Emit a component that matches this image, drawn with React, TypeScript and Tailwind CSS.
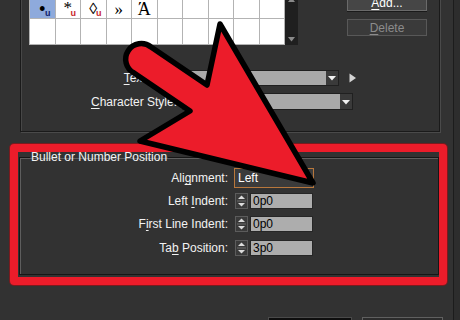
import React from "react";

const font = { fontFamily: '"Liberation Sans", Arial, sans-serif' };
const serif = { fontFamily: '"Liberation Serif", "Times New Roman", serif' };

function U({ children }: { children: React.ReactNode }) {
  return <span className="underline decoration-1 underline-offset-[2px]">{children}</span>;
}

type CellProps = { glyph?: string; mark?: "blue" | "red"; selected?: boolean; glyphClass?: string };

function Cell({ glyph, mark, selected, glyphClass }: CellProps) {
  return (
    <div
      className={`relative flex items-center justify-center pt-[6px] border-r border-b border-[#b3b3b3] ${
        selected ? "bg-[#8eaadc]" : "bg-white"
      }`}
    >
      {glyph && (
        <span className={`text-black leading-none ${glyphClass ?? "text-[17px]"}`} style={serif}>
          {glyph}
        </span>
      )}
      {mark && (
        <span
          className={`absolute left-[15px] bottom-[0px] text-[9px] leading-[9px] font-bold ${
            mark === "blue" ? "text-[#10206a]" : "text-[#c8262d]"
          }`}
          style={font}
        >
          u
        </span>
      )}
    </div>
  );
}

function Dropdown({ width, height }: { width: number; height: number }) {
  return (
    <div className="flex border border-[#202020]" style={{ width, height }}>
      <div className="flex-1 bg-[#a9a9a9]" />
      <div className="w-[12px] bg-[#3a3a3a] flex items-center justify-center">
        <svg width="8" height="6" viewBox="0 0 8 6">
          <path d="M0 1 H8 L4 5.5 Z" fill="#f2f2f2" />
        </svg>
      </div>
    </div>
  );
}

function Spinner() {
  return (
    <svg width="13" height="16" viewBox="0 0 13 16" className="shrink-0">
      <rect x="0" y="0" width="13" height="16" fill="#3a3a3a" />
      <rect x="0.5" y="0.5" width="12" height="15" fill="none" stroke="#5c5c5c" />
      <path d="M3 6 L6.5 2.5 L10 6 Z" fill="#dcdcdc" />
      <line x1="2" y1="8" x2="11" y2="8" stroke="#6a6a6a" />
      <path d="M3 10 L6.5 13.5 L10 10 Z" fill="#dcdcdc" />
    </svg>
  );
}

function SpinRow({ label, value }: { label: React.ReactNode; value: string }) {
  return (
    <div className="flex items-center h-[16px]">
      <div className="w-[198px] text-right whitespace-nowrap">{label}</div>
      <div className="ml-[7px] flex items-center">
        <Spinner />
        <div className="ml-[2px] w-[63px] h-[16px] bg-[#adadad] border border-[#262626] text-black text-[12px] leading-[14px] pl-[2px]">
          {value}
        </div>
      </div>
    </div>
  );
}

export default function App() {
  return (
    <div
      className="relative w-[460px] h-[320px] overflow-hidden bg-[#323232] text-[#f2f2f2] text-[12px] leading-[14px]"
      style={font}
    >
      <div className="flex h-full">
        <div className="w-[453px] shrink-0 flex flex-col">
          {/* upper frame */}
          <div className="ml-[20px] mt-[-12px] w-[420px] h-[144px] shrink-0 border border-[#1a1a1a] shadow-[1px_1px_0_#4a4a4a,inset_1px_1px_0_#474747] pl-[8px] pt-[5px]">
            <div className="flex">
              {/* glyph table */}
              <div className="flex h-[51px]">
                <div className="grid grid-cols-[repeat(10,25.5px)] grid-rows-[25px_26px] border-l border-[#b3b3b3]">
                  <Cell glyph="•" mark="blue" selected glyphClass="text-[20px]" />
                  <Cell glyph="*" mark="red" glyphClass="text-[17px] -translate-y-[2px]" />
                  <Cell glyph="◊" mark="red" glyphClass="text-[16px]" />
                  <Cell glyph="»" glyphClass="text-[17px]" />
                  <Cell glyph="Ά" glyphClass="text-[18px]" />
                  <Cell />
                  <Cell />
                  <Cell />
                  <Cell />
                  <Cell />
                  {Array.from({ length: 10 }).map((_, i) => (
                    <Cell key={i} />
                  ))}
                </div>
                <div className="w-[13px] bg-[#1f1f1f] flex flex-col items-center justify-between py-[3px]">
                  <svg width="7" height="5" viewBox="0 0 7 5">
                    <path d="M0 5 L3.5 0.5 L7 5 Z" fill="#8a8a8a" />
                  </svg>
                  <svg width="7" height="5" viewBox="0 0 7 5">
                    <path d="M0 0 H7 L3.5 4.5 Z" fill="#8a8a8a" />
                  </svg>
                </div>
              </div>
              {/* buttons */}
              <div className="ml-[49px] flex flex-col gap-[8px]">
                <div className="w-[80px] h-[17px] bg-[#464646] border border-[#6a6a6a] shadow-[0_1px_0_#1a1a1a] flex items-center justify-center text-white">
                  <span>
                    <U>A</U>dd...
                  </span>
                </div>
                <div className="w-[80px] h-[17px] bg-[#3a3a3a] border border-[#585858] flex items-center justify-center text-[#8c8c8c]">
                  <span>
                    <U>D</U>elete
                  </span>
                </div>
              </div>
            </div>

            <div className="mt-[25px] flex items-center h-[16px]">
              <div className="w-[148px] text-right whitespace-nowrap">
                <U>T</U>ext After:
              </div>
              <div className="ml-[5px]">
                <Dropdown width={157} height={16} />
              </div>
              <svg width="8" height="10" viewBox="0 0 8 10" className="ml-[10px]">
                <path d="M0.5 0.5 L7 5 L0.5 9.5 Z" fill="#d4d4d4" />
              </svg>
            </div>
            <div className="mt-[7px] flex items-center h-[17px]">
              <div className="w-[148px] text-right whitespace-nowrap">
                <U>C</U>haracter Style:
              </div>
              <div className="ml-[5px]">
                <Dropdown width={171} height={17} />
              </div>
            </div>
          </div>

          {/* bullet or number position group */}
          <fieldset className="ml-[19px] mt-[18px] w-[420px] h-[125px] shrink-0 border border-[#161616] shadow-[inset_1px_1px_0_#5e5e5e] pl-[10px]">
            <legend className="px-[1px] text-[12px] leading-[14px]">Bullet or Number Position</legend>
            <div className="mt-[4px] flex items-center h-[20px]">
              <div className="w-[198px] text-right whitespace-nowrap">
                Ali<U>g</U>nment:
              </div>
              <div className="ml-[6px] w-[80px] h-[20px] border border-[#b8773c] bg-[#3b3b3b] flex items-center justify-between pl-[3px] pr-[3px] text-white">
                <span>Left</span>
                <svg width="7" height="5" viewBox="0 0 7 5">
                  <path d="M0.5 0.5 H6.5 L3.5 4.5 Z" fill="#e0e0e0" />
                </svg>
              </div>
            </div>
            <div className="mt-[5px]">
              <SpinRow
                label={
                  <>
                    Left <U>I</U>ndent:
                  </>
                }
                value="0p0"
              />
            </div>
            <div className="mt-[7px]">
              <SpinRow
                label={
                  <>
                    F<U>i</U>rst Line Indent:
                  </>
                }
                value="0p0"
              />
            </div>
            <div className="mt-[8px]">
              <SpinRow
                label={
                  <>
                    Ta<U>b</U> Position:
                  </>
                }
                value="3p0"
              />
            </div>
          </fieldset>

          {/* bottom buttons */}
          <div className="ml-[268px] mt-[42px] flex gap-[10px]">
            <div className="w-[84px] h-[20px] bg-[#0e0e0e] border border-[#4a4a4a]" />
            <div className="w-[81px] h-[20px] bg-[#2c2c2c] border border-[#606060]" />
          </div>
        </div>
        <div className="w-[1px] bg-[#1c1c1c]" />
        <div className="flex-1 bg-[#2d2d2d]" />
      </div>

      {/* red highlight box */}
      <div className="absolute left-[10px] top-[144px] w-[437px] h-[141px] border-[8px] border-[#ec1c2a] rounded-[4px] shadow-[0_0_0_1px_#7a1a1e]" />

      {/* red arrow */}
      <svg className="absolute left-0 top-0" width="460" height="320" viewBox="0 0 460 320">
        <path
          d="M151 47 L207 85 L220 24 L313 183 L140 141 L190 111 L134 73 A15.6 15.6 0 1 1 151 47 Z"
          fill="#ec1c2a"
          stroke="#000"
          strokeWidth="5.5"
          strokeLinejoin="round"
        />
      </svg>
    </div>
  );
}
